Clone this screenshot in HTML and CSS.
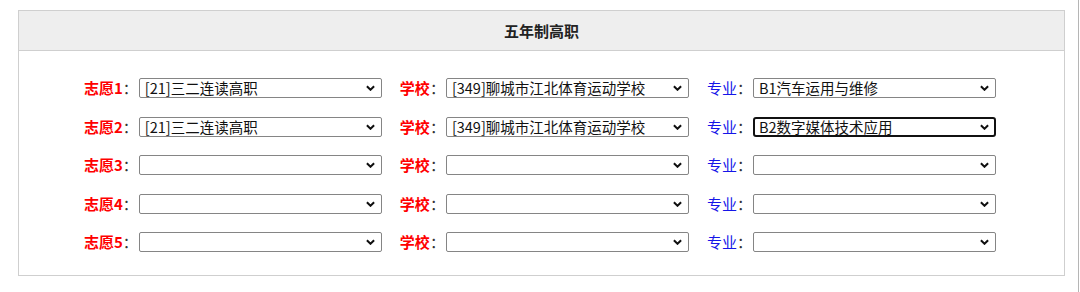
FILE: index.html
```html
<!DOCTYPE html>
<html lang="zh-CN">
<head>
<meta charset="UTF-8">
<meta name="viewport" content="width=device-width, initial-scale=1.0">
<title>五年制高职</title>
<link rel="stylesheet" href="styles.css">
</head>
<body>
<div class="page">
    <div class="panel">
        <div class="panel-title">五年制高职</div>
        <div class="panel-body">
            <div class="choice-row">
                <div class="field"><label class="red">志愿1</label><span class="colon">：</span>
                    <div class="pick"><span class="pick-text">[21]三二连读高职</span><svg class="chev" viewBox="0 0 10 6"><path d="M1 1 L5 5 L9 1"/></svg></div></div>
                <div class="field"><label class="red">学校</label><span class="colon">：</span>
                    <div class="pick"><span class="pick-text">[349]聊城市江北体育运动学校</span><svg class="chev" viewBox="0 0 10 6"><path d="M1 1 L5 5 L9 1"/></svg></div></div>
                <div class="field"><label class="blue">专业</label><span class="colon">：</span>
                    <div class="pick"><span class="pick-text">B1汽车运用与维修</span><svg class="chev" viewBox="0 0 10 6"><path d="M1 1 L5 5 L9 1"/></svg></div></div>
            </div>
            <div class="choice-row">
                <div class="field"><label class="red">志愿2</label><span class="colon">：</span>
                    <div class="pick"><span class="pick-text">[21]三二连读高职</span><svg class="chev" viewBox="0 0 10 6"><path d="M1 1 L5 5 L9 1"/></svg></div></div>
                <div class="field"><label class="red">学校</label><span class="colon">：</span>
                    <div class="pick"><span class="pick-text">[349]聊城市江北体育运动学校</span><svg class="chev" viewBox="0 0 10 6"><path d="M1 1 L5 5 L9 1"/></svg></div></div>
                <div class="field"><label class="blue">专业</label><span class="colon">：</span>
                    <div class="pick focused"><span class="pick-text">B2数字媒体技术应用</span><svg class="chev" viewBox="0 0 10 6"><path d="M1 1 L5 5 L9 1"/></svg></div></div>
            </div>
            <div class="choice-row">
                <div class="field"><label class="red">志愿3</label><span class="colon">：</span>
                    <div class="pick"><span class="pick-text"></span><svg class="chev" viewBox="0 0 10 6"><path d="M1 1 L5 5 L9 1"/></svg></div></div>
                <div class="field"><label class="red">学校</label><span class="colon">：</span>
                    <div class="pick"><span class="pick-text"></span><svg class="chev" viewBox="0 0 10 6"><path d="M1 1 L5 5 L9 1"/></svg></div></div>
                <div class="field"><label class="blue">专业</label><span class="colon">：</span>
                    <div class="pick"><span class="pick-text"></span><svg class="chev" viewBox="0 0 10 6"><path d="M1 1 L5 5 L9 1"/></svg></div></div>
            </div>
            <div class="choice-row">
                <div class="field"><label class="red">志愿4</label><span class="colon">：</span>
                    <div class="pick"><span class="pick-text"></span><svg class="chev" viewBox="0 0 10 6"><path d="M1 1 L5 5 L9 1"/></svg></div></div>
                <div class="field"><label class="red">学校</label><span class="colon">：</span>
                    <div class="pick"><span class="pick-text"></span><svg class="chev" viewBox="0 0 10 6"><path d="M1 1 L5 5 L9 1"/></svg></div></div>
                <div class="field"><label class="blue">专业</label><span class="colon">：</span>
                    <div class="pick"><span class="pick-text"></span><svg class="chev" viewBox="0 0 10 6"><path d="M1 1 L5 5 L9 1"/></svg></div></div>
            </div>
            <div class="choice-row">
                <div class="field"><label class="red">志愿5</label><span class="colon">：</span>
                    <div class="pick"><span class="pick-text"></span><svg class="chev" viewBox="0 0 10 6"><path d="M1 1 L5 5 L9 1"/></svg></div></div>
                <div class="field"><label class="red">学校</label><span class="colon">：</span>
                    <div class="pick"><span class="pick-text"></span><svg class="chev" viewBox="0 0 10 6"><path d="M1 1 L5 5 L9 1"/></svg></div></div>
                <div class="field"><label class="blue">专业</label><span class="colon">：</span>
                    <div class="pick"><span class="pick-text"></span><svg class="chev" viewBox="0 0 10 6"><path d="M1 1 L5 5 L9 1"/></svg></div></div>
            </div>
        </div>
    </div>
</div>
</body>
</html>
```

FILE: styles.css
```css
body {
    margin: 0;
    padding: 0;
    background-color: #fff;
    font-family: "Noto Sans CJK SC", "Liberation Sans", sans-serif;
    color: #222;
}
.page {
    width: 1079px;
    height: 292px;
    border-right: 1px solid #b5b5b5;
    padding-top: 10px;
    box-sizing: border-box;
}
.panel {
    margin-left: 18px;
    width: 1047px;
    border: 1px solid #cfcfcf;
    box-sizing: border-box;
}
.panel-title {
    height: 39px;
    line-height: 39px;
    background-color: #eeeeee;
    border-bottom: 1px solid #cfcfcf;
    text-align: center;
    font-size: 15px;
    font-weight: bold;
    color: #222;
}
.panel-body {
    padding: 27px 0 23px 65px;
    display: flex;
    flex-direction: column;
    gap: 18.5px;
}
.choice-row {
    display: flex;
    gap: 18px;
    height: 20px;
}
.field {
    display: flex;
    align-items: center;
}
.field label {
    font-size: 15px;
    font-weight: bold;
    line-height: 20px;
}
.field label.blue {
    font-weight: normal;
}
.red {
    color: #ff0000;
}
.blue {
    color: #1515e8;
}
.colon {
    font-size: 15px;
    line-height: 20px;
    color: #333;
    width: 16px;
}
.pick {
    width: 243px;
    height: 20px;
    display: flex;
    align-items: center;
    justify-content: space-between;
    padding: 0 6px 0 5px;
    box-sizing: border-box;
    background-color: #fff;
    border: 1px solid #858585;
    border-radius: 2px;
    overflow: hidden;
}
.pick-text {
    font-size: 14.5px;
    line-height: 18px;
    color: #111;
    white-space: nowrap;
}
.chev {
    width: 9px;
    height: 6px;
    flex-shrink: 0;
}
.chev path {
    fill: none;
    stroke: #111;
    stroke-width: 2.2;
}
.pick.focused {
    border: 2px solid #111;
    border-radius: 3px;
    padding: 0 5px 0 4px;
}
```
